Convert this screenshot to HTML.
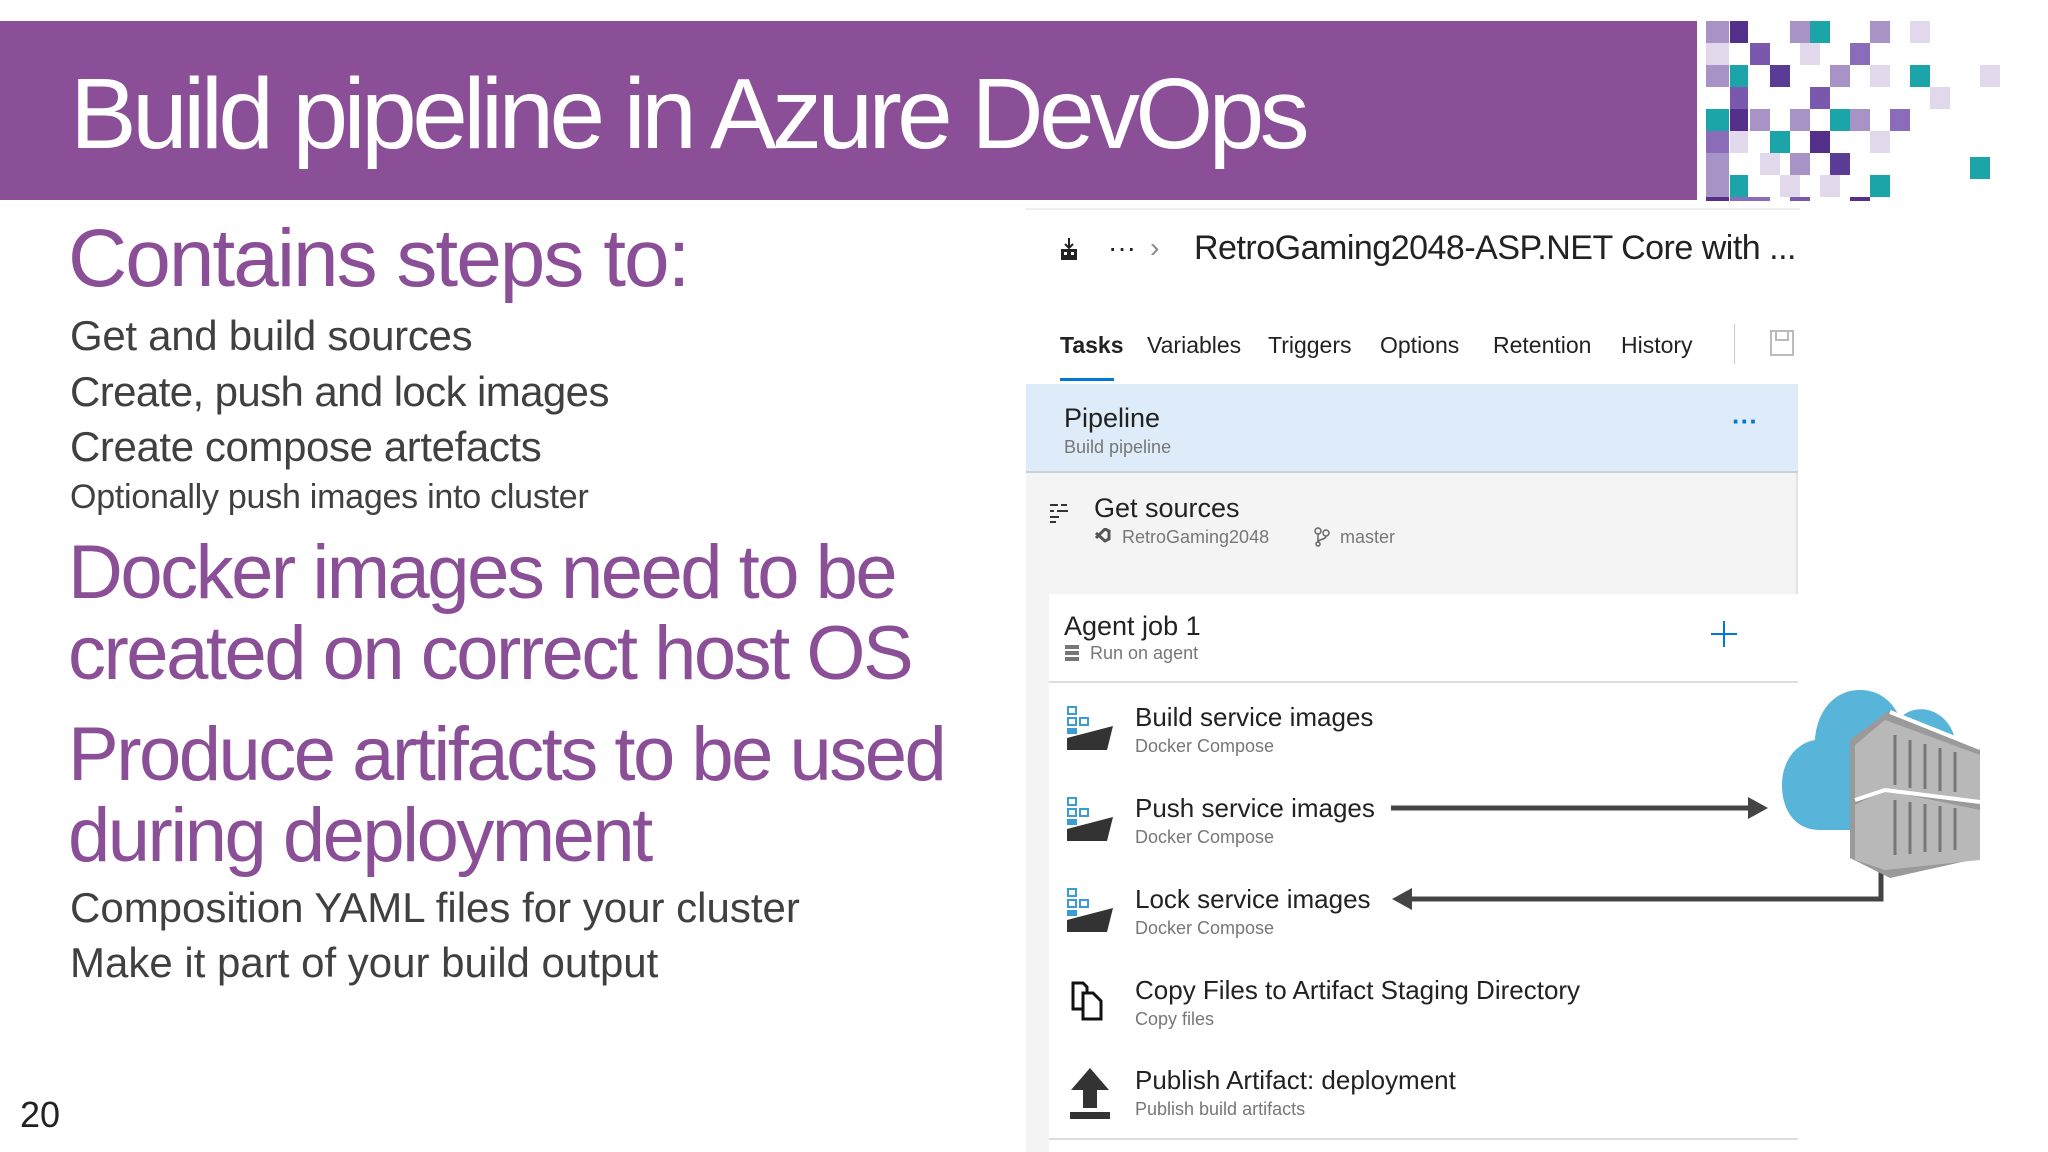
<!DOCTYPE html>
<html><head><meta charset="utf-8"><style>
*{margin:0;padding:0;box-sizing:border-box}
body{width:2048px;height:1152px;position:relative;overflow:hidden;background:#fff;font-family:"Liberation Sans",sans-serif}
.a{position:absolute;white-space:nowrap;line-height:1}
.p{color:#8a4f96}
.g{color:#404040}
.ui{color:#222}
.sub{color:#777}
</style></head><body>
<div class="a" style="left:0;top:21px;width:1697px;height:179px;background:#8a4f96"></div>
<div class="a" style="left:70px;top:64px;font-size:100px;color:#fff;letter-spacing:-4.6px">Build pipeline in Azure DevOps</div>

<svg class="a" style="left:1706px;top:21px" width="300" height="180">
<g>
<rect x="0" y="0" width="23" height="22" fill="#a893c6"/><rect x="24" y="0" width="18" height="22" fill="#54308a"/>
<rect x="84" y="0" width="20" height="22" fill="#a893c6"/><rect x="104" y="0" width="20" height="22" fill="#1ba5a9"/>
<rect x="164" y="0" width="20" height="22" fill="#a893c6"/><rect x="204" y="0" width="20" height="22" fill="#e1d8ec"/>
<rect x="0" y="22" width="23" height="22" fill="#e1d8ec"/><rect x="44" y="22" width="20" height="22" fill="#7a58ad"/>
<rect x="94" y="22" width="20" height="22" fill="#e1d8ec"/><rect x="144" y="22" width="20" height="22" fill="#8a6cb8"/>
<rect x="0" y="44" width="23" height="22" fill="#a893c6"/><rect x="24" y="44" width="18" height="22" fill="#1ba5a9"/><rect x="64" y="44" width="20" height="22" fill="#5a3c96"/>
<rect x="124" y="44" width="20" height="22" fill="#a893c6"/><rect x="164" y="44" width="20" height="22" fill="#e1d8ec"/><rect x="204" y="44" width="20" height="22" fill="#1ba5a9"/><rect x="274" y="44" width="20" height="22" fill="#e1d8ec"/>
<rect x="24" y="66" width="18" height="22" fill="#7a58ad"/><rect x="104" y="66" width="20" height="22" fill="#7a58ad"/><rect x="224" y="66" width="20" height="22" fill="#e1d8ec"/>
<rect x="0" y="88" width="23" height="22" fill="#1ba5a9"/><rect x="24" y="88" width="18" height="22" fill="#54308a"/><rect x="44" y="88" width="20" height="22" fill="#a893c6"/>
<rect x="84" y="88" width="20" height="22" fill="#a893c6"/><rect x="124" y="88" width="20" height="22" fill="#1ba5a9"/><rect x="144" y="88" width="20" height="22" fill="#a893c6"/><rect x="184" y="88" width="20" height="22" fill="#8a6cb8"/>
<rect x="0" y="110" width="23" height="22" fill="#8a6cb8"/><rect x="24" y="110" width="18" height="22" fill="#e1d8ec"/><rect x="64" y="110" width="20" height="22" fill="#1ba5a9"/><rect x="104" y="110" width="20" height="22" fill="#54308a"/><rect x="164" y="110" width="20" height="22" fill="#e1d8ec"/>
<rect x="0" y="132" width="23" height="22" fill="#a893c6"/><rect x="54" y="132" width="20" height="22" fill="#e1d8ec"/><rect x="84" y="132" width="20" height="22" fill="#a893c6"/><rect x="124" y="132" width="20" height="22" fill="#5a3c96"/><rect x="264" y="136" width="20" height="22" fill="#1ba5a9"/>
<rect x="0" y="154" width="23" height="22" fill="#a893c6"/><rect x="24" y="154" width="18" height="22" fill="#1ba5a9"/><rect x="74" y="154" width="20" height="22" fill="#e1d8ec"/><rect x="114" y="154" width="20" height="22" fill="#e1d8ec"/><rect x="164" y="154" width="20" height="22" fill="#1ba5a9"/>
<rect x="0" y="176" width="23" height="4" fill="#54308a"/><rect x="24" y="176" width="40" height="4" fill="#8a6cb8"/><rect x="84" y="176" width="20" height="4" fill="#7a58ad"/><rect x="144" y="176" width="20" height="4" fill="#54308a"/>
</g></svg>

<div class="a p" style="left:68px;top:218px;font-size:82px;letter-spacing:-2px">Contains steps to:</div>
<div class="a g" style="left:70px;top:315px;font-size:42px;letter-spacing:-0.3px">Get and build sources</div>
<div class="a g" style="left:70px;top:371px;font-size:42px;letter-spacing:-0.6px">Create, push and lock images</div>
<div class="a g" style="left:70px;top:426px;font-size:42px;letter-spacing:-0.4px">Create compose artefacts</div>
<div class="a g" style="left:70px;top:480px;font-size:34px;letter-spacing:-0.25px">Optionally push images into cluster</div>
<div class="a p" style="left:68px;top:535px;font-size:76px;letter-spacing:-2.5px">Docker images need to be</div>
<div class="a p" style="left:68px;top:616px;font-size:76px;letter-spacing:-2.5px">created on correct host OS</div>
<div class="a p" style="left:68px;top:717px;font-size:76px;letter-spacing:-2.5px">Produce artifacts to be used</div>
<div class="a p" style="left:68px;top:798px;font-size:76px;letter-spacing:-2.5px">during deployment</div>
<div class="a g" style="left:70px;top:887px;font-size:42px;letter-spacing:0px">Composition YAML files for your cluster</div>
<div class="a g" style="left:70px;top:942px;font-size:42px;letter-spacing:0px">Make it part of your build output</div>
<div class="a" style="left:20px;top:1097px;font-size:36px;color:#222">20</div>

<!-- right panel -->
<div class="a" style="left:1025px;top:208px;width:775px;height:2px;background:#f0f0f0"></div>
<svg class="a" style="left:1058px;top:236px" width="22" height="26"><path d="M11 2v9M7 8l4 4 4-4" stroke="#222" stroke-width="2" fill="none"/><rect x="3" y="13" width="16" height="11" fill="#222"/><rect x="6" y="16" width="3" height="3" fill="#fff"/><rect x="13" y="16" width="3" height="3" fill="#fff"/></svg>
<div class="a ui" style="left:1108px;top:234px;font-size:28px">···</div>
<div class="a" style="left:1150px;top:234px;font-size:28px;color:#888">›</div>
<div class="a ui" style="left:1194px;top:231px;font-size:34px;letter-spacing:-0.5px">RetroGaming2048-ASP.NET Core with ...</div>

<div class="a ui" style="left:1060px;top:334px;font-size:23px;font-weight:bold">Tasks</div>
<div class="a ui" style="left:1147px;top:334px;font-size:23px">Variables</div>
<div class="a ui" style="left:1268px;top:334px;font-size:23px">Triggers</div>
<div class="a ui" style="left:1380px;top:334px;font-size:23px">Options</div>
<div class="a ui" style="left:1493px;top:334px;font-size:23px">Retention</div>
<div class="a ui" style="left:1621px;top:334px;font-size:23px">History</div>
<div class="a" style="left:1734px;top:324px;width:1px;height:40px;background:#ccc"></div>
<svg class="a" style="left:1770px;top:330px" width="24" height="26"><rect x="1" y="1" width="22" height="24" fill="none" stroke="#bbb" stroke-width="2"/><rect x="6" y="1" width="12" height="9" fill="none" stroke="#bbb" stroke-width="2"/></svg>
<div class="a" style="left:1060px;top:378px;width:54px;height:3px;background:#0078d4"></div>

<div class="a" style="left:1026px;top:384px;width:772px;height:768px;background:#f4f4f4;border-right:2px solid #e4e4e4"></div>
<div class="a" style="left:1026px;top:384px;width:772px;height:89px;background:#deebf8;border-bottom:2px solid #c8d0d8"></div>
<div class="a ui" style="left:1064px;top:405px;font-size:27px">Pipeline</div>
<div class="a sub" style="left:1064px;top:438px;font-size:18px">Build pipeline</div>
<div class="a" style="left:1732px;top:408px;font-size:26px;color:#0078d4;font-weight:bold">···</div>

<svg class="a" style="left:1048px;top:500px" width="24" height="24"><path d="M2 5h8M13 5h6M2 11h4M9 11h11M2 17h9M2 22h6" stroke="#333" stroke-width="2"/></svg>
<div class="a ui" style="left:1094px;top:495px;font-size:27px">Get sources</div>
<svg class="a" style="left:1094px;top:528px" width="18" height="18"><path d="M2 5l9 8 4-2V3l-4-2-9 9" stroke="#555" stroke-width="3" fill="none"/></svg>
<div class="a sub" style="left:1122px;top:528px;font-size:18px">RetroGaming2048</div>
<svg class="a" style="left:1314px;top:527px" width="16" height="20"><circle cx="4" cy="4" r="3" stroke="#666" fill="none" stroke-width="1.5"/><circle cx="4" cy="17" r="2" stroke="#666" fill="none" stroke-width="1.5"/><circle cx="12" cy="6" r="3" stroke="#666" fill="none" stroke-width="1.5"/><path d="M4 7v8M12 9c0 4-8 3-8 6" stroke="#666" fill="none" stroke-width="1.5"/></svg>
<div class="a sub" style="left:1340px;top:528px;font-size:18px">master</div>

<div class="a" style="left:1049px;top:594px;width:749px;height:558px;background:#fff"></div>
<div class="a ui" style="left:1064px;top:613px;font-size:27px">Agent job 1</div>
<svg class="a" style="left:1064px;top:644px" width="16" height="18"><rect x="1" y="1" width="14" height="4" fill="#777"/><rect x="1" y="7" width="14" height="4" fill="#777"/><rect x="1" y="13" width="14" height="4" fill="#777"/></svg>
<div class="a sub" style="left:1090px;top:644px;font-size:18px">Run on agent</div>
<svg class="a" style="left:1710px;top:620px" width="28" height="28"><path d="M14 1v26M1 14h26" stroke="#0078d4" stroke-width="2"/></svg>
<div class="a" style="left:1049px;top:681px;width:749px;height:2px;background:#ddd"></div>

<!-- items -->
<svg width="0" height="0" style="position:absolute"><defs><g id="dk"><rect x="0" y="0" width="10" height="9" fill="#3a9bd5"/><rect x="2" y="2" width="6" height="5" fill="#fff"/><rect x="0" y="11" width="10" height="9" fill="#3a9bd5"/><rect x="2" y="13" width="6" height="5" fill="#fff"/><rect x="12" y="11" width="10" height="9" fill="#3a9bd5"/><rect x="14" y="13" width="6" height="5" fill="#fff"/><rect x="0" y="22" width="10" height="6" fill="#3a9bd5"/><path d="M0 32l46-12-6 24H0z" fill="#333"/></g></defs></svg>
<svg class="a" style="left:1067px;top:706px" width="48" height="46"><use href="#dk"/></svg>
<div class="a ui" style="left:1135px;top:704px;font-size:26px">Build service images</div>
<div class="a sub" style="left:1135px;top:737px;font-size:18px">Docker Compose</div>
<svg class="a" style="left:1067px;top:797px" width="48" height="46"><use href="#dk"/></svg>
<div class="a ui" style="left:1135px;top:795px;font-size:26px">Push service images</div>
<div class="a sub" style="left:1135px;top:828px;font-size:18px">Docker Compose</div>
<svg class="a" style="left:1067px;top:888px" width="48" height="46"><use href="#dk"/></svg>
<div class="a ui" style="left:1135px;top:886px;font-size:26px">Lock service images</div>
<div class="a sub" style="left:1135px;top:919px;font-size:18px">Docker Compose</div>
<svg class="a" style="left:1071px;top:981px" width="40" height="40"><path d="M2 2h10l4 4v22H2z" fill="none" stroke="#111" stroke-width="3"/><path d="M12 12h10l8 8v18H12z" fill="#fff" stroke="#111" stroke-width="3"/></svg>
<div class="a ui" style="left:1135px;top:977px;font-size:26px">Copy Files to Artifact Staging Directory</div>
<div class="a sub" style="left:1135px;top:1010px;font-size:18px">Copy files</div>
<svg class="a" style="left:1070px;top:1068px" width="42" height="52"><path d="M20 0l19 22H27v18H13V22H1z" fill="#333"/><rect x="0" y="44" width="40" height="7" fill="#333"/></svg>
<div class="a ui" style="left:1135px;top:1067px;font-size:26px">Publish Artifact: deployment</div>
<div class="a sub" style="left:1135px;top:1100px;font-size:18px">Publish build artifacts</div>
<div class="a" style="left:1049px;top:1138px;width:749px;height:2px;background:#ddd"></div>

<!-- arrows -->
<svg class="a" style="left:0;top:0" width="2048" height="1152">
<path d="M1391 808H1750" stroke="#444" stroke-width="5"/><path d="M1768 808l-20-11v22z" fill="#444"/>
<path d="M1881 868V899H1410" stroke="#444" stroke-width="5" fill="none"/><path d="M1392 899l20-11v22z" fill="#444"/>
<!-- cloud -->
<path d="M1820 830c-25 0-38-20-38-45 0-25 15-42 33-45 2-30 20-50 45-50 20 0 33 12 40 28 8-8 18-10 28-8 20 5 30 25 28 45v75z" fill="#59b4d9"/>
<path d="M1850 740l40-30 90 38v110l-90 20-40-20z" fill="#9a9a9a"/>
<path d="M1855 745l30-25 95 35v45l-95-10-30 10z" fill="#b8b8b8"/>
<path d="M1855 805l30-15 95 20v50l-95 10-30-10z" fill="#b8b8b8"/>
<path d="M1890 712l90 36M1855 800l30-10 95 12" stroke="#fff" stroke-width="4" fill="none"/>
<g stroke="#777" stroke-width="3"><path d="M1895 735v50M1910 740v48M1925 744v45M1940 748v43M1955 752v40M1895 800v55M1910 802v52M1925 804v48M1940 806v46M1955 808v42"/></g>
</svg>
</body></html>
